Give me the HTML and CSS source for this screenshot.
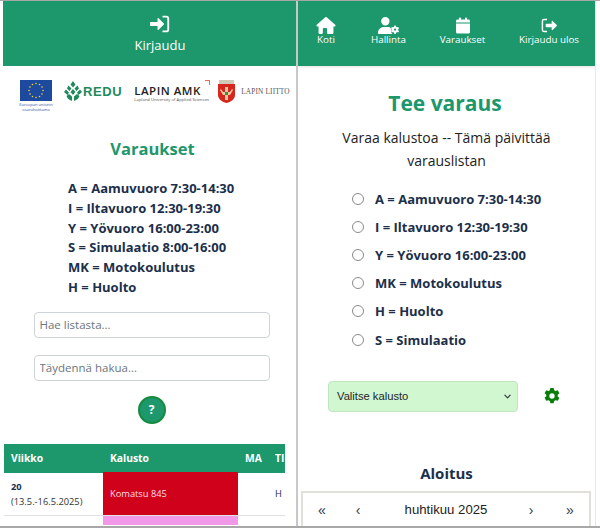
FILE: index.html
```html
<!DOCTYPE html>
<html lang="fi">
<head>
<meta charset="utf-8">
<title>Varaukset</title>
<link rel="stylesheet" href="styles.css">
</head>
<body>
<div class="screens">
  <section class="panel left">
    <header class="login-bar">
      <svg class="login-icon" viewBox="0 0 24 24" width="20" height="20"><path d="M1 9.500h8V5.600c0-.7.800-1 1.300-.5l6.300 6.200c.4.400.4 1 0 1.400l-6.300 6.200c-.5.500-1.300.2-1.300-.5v-3.900H1c-.6 0-1-.4-1-1v-3c0-.6.400-1 1-1z"/><path d="M15 2h4.500A3.500 3.500 0 0 1 23 5.500v13a3.500 3.500 0 0 1-3.500 3.500H15v-2.200h4.200c.9 0 1.600-.7 1.600-1.600V5.800c0-.9-.7-1.600-1.600-1.600H15z"/></svg>
      <span>Kirjaudu</span>
    </header>
    <div class="logos">
      <div class="logo-eu">
        <svg viewBox="0 0 32 21" width="32" height="21"><rect width="32" height="21" fill="#1d4a9e"/><g fill="#f5d327"><circle cx="16" cy="3.500" r=".8"/><circle cx="19.500" cy="4.500" r=".8"/><circle cx="22" cy="7" r=".8"/><circle cx="23" cy="10.500" r=".8"/><circle cx="22" cy="14" r=".8"/><circle cx="19.500" cy="16.500" r=".8"/><circle cx="16" cy="17.500" r=".8"/><circle cx="12.500" cy="16.500" r=".8"/><circle cx="10" cy="14" r=".8"/><circle cx="9" cy="10.500" r=".8"/><circle cx="10" cy="7" r=".8"/><circle cx="12.500" cy="4.500" r=".8"/></g></svg>
        <small>Euroopan unionin<br>osarahoittama</small>
      </div>
      <div class="logo-redu">
        <svg viewBox="0 0 18 20" width="18" height="20"><path fill="#1f8a5c" d="M9 0l2.500 3.500L9 6.500 6.500 3.500zM4.500 4.500L7.500 7.500 5.500 10 3 7.500zM13.500 4.500L15 7.500 12.500 10 10.500 7.500zM9 8l2.500 3L9 14 6.500 11zM2 8.500l3 3L3.500 14 0 11zM16 8.500L18 11l-3.500 3L13 11.500zM5 13l3 2.500V20C5 19 3 17 2.500 15zM13 13l2.500 2C15 17 13 19 10 20v-4.500z"/></svg>
        <span>REDU</span>
      </div>
      <div class="logo-amk">
        <strong>LAPIN AMK</strong>
        <small>Lapland University of Applied Sciences</small>
        <i class="amk-mark"></i>
      </div>
      <div class="logo-liitto">
        <svg viewBox="0 0 17 23" width="17" height="23"><path fill="#cfc9b8" d="M1 0h15v4H1z"/><path fill="#d7261e" d="M0 4h17v11c0 4-4 7-8.500 8C4 22 0 19 0 15z"/><path fill="#efc9a0" d="M7 7h3v5h2l2-3 1 1-3 5h-2v5H7v-5H5L2 10l1-1 2 3h2z"/><path fill="#3f8f3f" d="M7 12h3v3H7z"/></svg>
        <span>LAPIN LIITTO</span>
      </div>
    </div>
    <h2 class="title-small">Varaukset</h2>
    <ul class="legend">
      <li>A = Aamuvuoro 7:30-14:30</li>
      <li>I = Iltavuoro 12:30-19:30</li>
      <li>Y = Yövuoro 16:00-23:00</li>
      <li>S = Simulaatio 8:00-16:00</li>
      <li>MK = Motokoulutus</li>
      <li>H = Huolto</li>
    </ul>
    <div class="searches">
      <input class="search" type="text" placeholder="Hae listasta...">
      <input class="search" type="text" placeholder="Täydennä hakua...">
      <button class="help" type="button">?</button>
    </div>
    <div class="table">
      <div class="thead">
        <span class="c-week">Viikko</span><span class="c-item">Kalusto</span><span class="c-ma">MA</span><span class="c-ti">TI</span>
      </div>
      <div class="trow">
        <div class="c-week week"><b>20</b><span>(13.5.-16.5.2025)</span></div>
        <div class="c-item komatsu">Komatsu 845</div>
        <div class="c-ma"></div>
        <div class="c-ti cell-h">H</div>
      </div>
      <div class="trow2"><div class="c-week"></div><div class="c-item pink"></div></div>
    </div>
  </section>

  <section class="panel right">
    <nav class="nav">
      <a class="nav-item n1">
        <svg viewBox="0 0 576 512" width="20" height="17"><path d="M575.800 255.500c0 18-15 32.100-32 32.100h-32l.7 160.200c0 2.700-.2 5.400-.5 8.100V472c0 22.100-17.900 40-40 40H360c-22.100 0-40-17.900-40-40V360c0-17.700-14.300-32-32-32h-64c-17.700 0-32 14.300-32 32v112c0 22.100-17.900 40-40 40H104c-22.100 0-40-17.900-40-40V287.600H32c-18 0-32-14-32-32.100 0-9 3-17 10-24L266.400 8c7-7 15-8 22-8s15 2 21 7l255.400 224.500c8 7 12 15 11 24z"/></svg>
        <span>Koti</span>
      </a>
      <a class="nav-item n2">
        <svg viewBox="0 0 640 512" width="21" height="17"><path d="M224 256a128 128 0 1 0 0-256 128 128 0 1 0 0 256zm-45.700 48C79.800 304 0 383.800 0 482.300 0 498.700 13.300 512 29.700 512h388.600c6.100 0 11.700-1.800 16.400-5-8-13-38-30-38-60 0-20 10-35 25-45-10-30-20-50-40-70-10-15-30-28-60-28z"/><path fill-rule="evenodd" d="M496 256h48l8 38 30 17 36-12 24 42-29 26v34l29 26-24 42-36-12-30 17-8 38h-48l-8-38-30-17-36 12-24-42 29-26v-34l-29-26 24-42 36 12 30-17zm24 90a34 34 0 1 0 0 68 34 34 0 0 0 0-68z"/></svg>
        <span>Hallinta</span>
      </a>
      <a class="nav-item n3">
        <svg viewBox="0 0 448 512" width="14" height="16"><path d="M128 0c17.700 0 32 14.300 32 32v32h128V32c0-17.700 14.300-32 32-32s32 14.300 32 32v32h48c26.500 0 48 21.500 48 48v48H0v-48c0-26.500 21.500-48 48-48h48V32c0-17.700 14.300-32 32-32zM0 192h448v272c0 26.500-21.500 48-48 48H48c-26.500 0-48-21.500-48-48z"/></svg>
        <span>Varaukset</span>
      </a>
      <a class="nav-item n4">
        <svg viewBox="0 0 24 24" width="16" height="16"><path d="M9 2H4.500A3.500 3.500 0 0 0 1 5.500v13A3.500 3.500 0 0 0 4.500 22H9v-2.200H4.800c-.9 0-1.600-.7-1.600-1.600V5.800c0-.9.700-1.600 1.600-1.600H9z"/><path d="M8 9.500h8V5.600c0-.7.800-1 1.300-.5l6.300 6.200c.4.400.4 1 0 1.400l-6.300 6.200c-.5.500-1.300.2-1.300-.5v-3.900H8c-.6 0-1-.4-1-1v-3c0-.6.400-1 1-1z"/></svg>
        <span>Kirjaudu ulos</span>
      </a>
    </nav>
    <h1 class="title-big">Tee varaus</h1>
    <p class="lead">Varaa kalustoa -- Tämä päivittää varauslistan</p>
    <ul class="radios">
      <li><i class="radio"></i>A = Aamuvuoro 7:30-14:30</li>
      <li><i class="radio"></i>I = Iltavuoro 12:30-19:30</li>
      <li><i class="radio"></i>Y = Yövuoro 16:00-23:00</li>
      <li><i class="radio"></i>MK = Motokoulutus</li>
      <li><i class="radio"></i>H = Huolto</li>
      <li><i class="radio"></i>S = Simulaatio</li>
    </ul>
    <div class="pick">
      <div class="select">
        <span>Valitse kalusto</span>
        <svg viewBox="0 0 16 16" width="7" height="7"><path fill="none" stroke="#343a40" stroke-width="2.800" stroke-linecap="round" stroke-linejoin="round" d="M2 5l6 6 6-6"/></svg>
      </div>
      <svg class="gear" viewBox="0 0 24 24" width="16" height="16"><path fill-rule="evenodd" d="M9.500 0h5l.8 3.400 2 1.100 3.300-1 2.500 4.300-2.500 2.400v2.400l2.500 2.400-2.500 4.300-3.300-1-2 1.100-.8 3.600h-5l-.8-3.600-2-1.100-3.300 1L.9 14.800l2.500-2.400V10l-2.500-2.200 2.500-4.300 3.300 1 2-1.100zM12 8a4 4 0 1 0 0 8 4 4 0 0 0 0-8z"/></svg>
    </div>
    <h3 class="start">Aloitus</h3>
    <div class="calendar">
      <span class="cal-nav">«</span><span class="cal-nav">‹</span><span class="cal-m">huhtikuu 2025</span><span class="cal-nav">›</span><span class="cal-nav">»</span>
    </div>
  </section>
</div>
<div class="bottom-line"></div>
</body>
</html>
```
FILE: styles.css
```css
* { box-sizing: border-box; }
html, body { margin: 0; height: 528px; overflow: hidden; background: #fff; }
body { font-family: "Open Sans", "Noto Sans", sans-serif; color: #212529; position: relative; }
.screens { display: flex; height: 528px; border-top: 1px solid #a8a8a8; padding-left: 3px; }
.panel { height: 527px; overflow: hidden; background: #fff; flex: none; }
.left { width: 295px; border-right: 2px solid #c8c8c8; }
.right { width: 298px; border-right: 1px solid #e8e8e8; }
.bottom-line { position: absolute; left: 0; right: 0; bottom: 0; height: 2px; background: #a8a8a8; }

.login-bar { background: #1d976c; height: 65px; color: #fff; display: flex; flex-direction: column; align-items: center; padding: 13px 0 0 21px; font-size: 13px; line-height: 18px; gap: 2px; }
.login-icon { fill: #fff; }

.logos { height: 66px; display: flex; padding: 14px 0 0 17px; }
.logo-eu { display: flex; flex-direction: column; align-items: center; flex: none; width: 32px; }
.logo-eu small { font-size: 4px; line-height: 5px; text-align: center; color: #2a4d9c; white-space: nowrap; margin-top: 1px; }
.logo-redu { display: flex; align-items: center; height: 20px; margin: 1px 0 0 12px; gap: 1px; flex: none; }
.logo-redu span { font-family: "Liberation Sans", sans-serif; font-weight: 700; font-size: 13px; letter-spacing: .6px; color: #1f8a5c; }
.logo-amk { position: relative; margin: 4px 0 0 12px; display: flex; flex-direction: column; flex: none; width: 71px; }
.logo-amk strong { font-size: 11.500px; font-weight: 600; line-height: 13px; color: #222; letter-spacing: .5px; white-space: nowrap; }
.logo-amk small { font-size: 4.200px; line-height: 6px; color: #555; white-space: nowrap; }
.amk-mark { position: absolute; right: -5px; top: -4px; width: 5px; height: 5px; border-top: 1px solid #ee6a50; border-right: 1px solid #ee6a50; }
.logo-liitto { display: flex; align-items: center; gap: 6px; margin: 0 0 0 13px; height: 23px; flex: none; }
.logo-liitto span { font-family: "Liberation Serif", serif; font-size: 7.300px; letter-spacing: .15px; color: #555; white-space: nowrap; }

.title-small { margin: 0; padding: 3px 0 0 6px; text-align: center; color: #1d976c; font-size: 16.500px; line-height: 28px; font-weight: 700; height: 47px; }
.legend { list-style: none; margin: 0; padding: 0 0 0 65px; color: #1c2f4a; font-size: 13px; font-weight: 700; line-height: 19.800px; }
.searches { display: flex; flex-direction: column; align-items: center; margin-top: 14px; padding-left: 4px; }
.search { width: 236px; height: 26px; border: 1px solid #ced4da; border-radius: 4px; padding: 0 5px; font: 11.500px "Open Sans", sans-serif; color: #495057; margin-bottom: 17px; outline: none; }
.search::placeholder { color: #6c757d; opacity: 1; }
.help { width: 28px; height: 28px; border-radius: 50%; border: 2px solid #168a3e; background: #1d976c; color: #fff; font: 700 12px "Open Sans", sans-serif; padding: 0; margin-top: -2px; }
.table { margin: 20px 0 0 1px; width: 281px; font-size: 9.300px; }
.thead { display: flex; background: #1d976c; color: #fff; font-weight: 700; font-size: 10.300px; height: 29px; align-items: center; }
.c-week { width: 99px; padding-left: 7px; flex: none; }
.c-item { width: 135px; padding-left: 7px; flex: none; }
.c-ma { width: 37px; padding-left: 7px; flex: none; }
.c-ti { width: 10px; flex: none; white-space: nowrap; overflow: hidden; }
.trow { display: flex; height: 43px; border-bottom: 1px solid #dee2e6; align-items: center; }
.week { display: flex; flex-direction: column; line-height: 15px; color: #333; }
.week b { color: #1c2f4a; }
.komatsu { background: #d0021b; color: #ffdfe4; height: 43px; display: flex; align-items: center; }
.cell-h { color: #1c2f4a; }
.trow2 { display: flex; height: 9px; }
.pink { background: #f199e8; height: 9px; }

.nav { background: #1d976c; height: 65px; color: #fff; display: flex; box-shadow: 0 1px 3px rgba(0,0,0,.12); font-size: 9.800px; line-height: 12px; }
.nav-item { display: flex; flex-direction: column; align-items: center; padding-top: 16px; flex: none; }
.nav-item svg { fill: #fff; display: block; height: 17px; }
.n1 { width: 56px; }
.n2 { width: 69px; }
.n3 { width: 71px; margin-left: 4px; }
.n4 { width: 76px; margin-left: 13px; white-space: nowrap; }
.title-big { margin: 0; padding: 22px 3px 0 0; text-align: center; color: #1d976c; font-size: 21px; line-height: 30px; font-weight: 700; }
.lead { margin: 8px auto 0; width: 250px; text-align: center; font-size: 14px; line-height: 23px; color: #222; }
.radios { list-style: none; margin: 13px 0 0; padding: 0 0 0 55px; color: #1c2f4a; font-size: 13px; font-weight: 700; }
.radios li { display: flex; align-items: center; height: 28.100px; gap: 11px; }
.radio { width: 12px; height: 12px; border: 1px solid #8a8a8a; border-radius: 50%; flex: none; margin-left: -1px; }
.pick { display: flex; align-items: center; margin: 27px 0 0 30px; gap: 26px; }
.select { width: 190px; height: 31px; background: #d1f7d1; border: 1px solid #c0e6c0; border-radius: 4px; display: flex; align-items: center; justify-content: space-between; padding: 0 6px 0 8px; font: 11.200px "Liberation Sans", sans-serif; color: #212529; }
.gear { fill: #0a7d0a; }
.start { margin: 51px 0 0; text-align: center; font-size: 15px; line-height: 20px; font-weight: 700; color: #1c2f4a; }
.calendar { margin: 8px 0 0 3px; width: 290px; height: 40px; border: 2px solid #e0e0d8; display: flex; align-items: flex-start; padding: 7px 0 0 15px; font: 13.200px/20px "Liberation Sans", sans-serif; color: #2a3a50; }
.cal-nav { width: 6px; text-align: center; font-size: 14px; flex: none; }
.cal-nav:nth-child(2) { margin-left: 31px; }
.cal-nav:nth-child(4) { margin-left: 40px; }
.cal-nav:nth-child(5) { margin-left: 32px; }
.cal-m { width: 84px; margin-left: 43px; text-align: center; color: #222; white-space: nowrap; flex: none; }
```
